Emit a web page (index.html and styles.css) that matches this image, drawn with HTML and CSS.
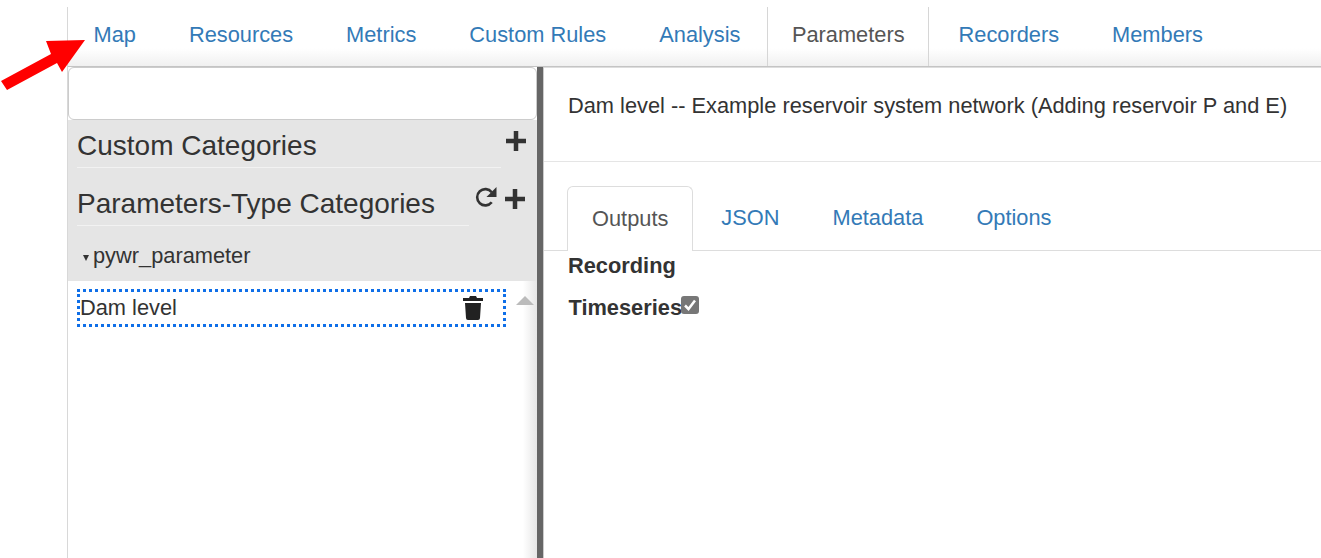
FILE: index.html
```html
<!DOCTYPE html>
<html lang="en">
<head>
  <meta charset="UTF-8" />
  <title>Dam level</title>
  <link rel="stylesheet" href="styles.css">
</head>
<body>
  <svg class="arrow" width="90" height="95" viewBox="0 0 90 95">
    <polygon points="85,40 46,41 51,54 1,81 7,90 57,63 62,72" fill="#f00"/>
  </svg>

  <div class="app">
    <ul class="nav">
      <li><a>Map</a></li>
      <li><a>Resources</a></li>
      <li><a>Metrics</a></li>
      <li><a>Custom Rules</a></li>
      <li><a>Analysis</a></li>
      <li class="active"><a>Parameters</a></li>
      <li><a>Recorders</a></li>
      <li><a>Members</a></li>
    </ul>

    <div class="main">
      <div class="sidebar">
        <div class="search"></div>
        <div class="categories">
          <div class="cat-head cat-custom">
            <h3>Custom Categories</h3>
            <div class="cat-icons">
              <svg class="icon" viewBox="0 0 20 20"><path d="M0 10H20M10 0V20" stroke="#333" stroke-width="4.500" fill="none"/></svg>
            </div>
          </div>
          <div class="cat-head cat-type">
            <h3>Parameters-Type Categories</h3>
            <div class="cat-icons">
              <svg class="icon-refresh" viewBox="0 0 24 24"><path d="M18.500 17A8.500 8.500 0 1 1 18.500 6.500" stroke="#333" stroke-width="2.700" fill="none"/><path d="M23.500 1V11.500H13Z" fill="#333"/></svg>
              <svg class="icon" viewBox="0 0 20 20"><path d="M0 10H20M10 0V20" stroke="#333" stroke-width="4.500" fill="none"/></svg>
            </div>
          </div>
          <div class="tree-node"><span class="caret"></span>pywr_parameter</div>
        </div>
        <div class="list">
          <div class="list-item">
            <span>Dam level</span>
            <svg class="trash" viewBox="0 0 20 24"><path d="M7 0H13L14 2H20V5H0V2H6Z" fill="#222"/><path d="M2 7H18L17 22Q17 24 15 24H5Q3 24 3 22Z" fill="#222"/></svg>
          </div>
          <span class="scroll-up"></span>
        </div>
      </div>

      <div class="splitter"></div>

      <div class="detail">
        <div class="detail-title">Dam level -- Example reservoir system network (Adding reservoir P and E)</div>
        <ul class="tabs">
          <li class="active"><a>Outputs</a></li>
          <li><a>JSON</a></li>
          <li><a>Metadata</a></li>
          <li><a>Options</a></li>
        </ul>
        <div class="recording">Recording</div>
        <div class="timeseries">Timeseries<span class="check"><svg viewBox="0 0 18 18"><path d="M4 9.500L7.500 13L14 4.500" stroke="#fff" stroke-width="2.500" fill="none"/></svg></span></div>
      </div>
    </div>
  </div>
</body>
</html>
```

FILE: styles.css
```css
body {
  margin: 0;
  height: 558px;
  overflow: hidden;
  background-color: #fff;
  color: #333;
  font-family: "Liberation Sans", Arial, sans-serif;
  padding-top: 7px;
  box-sizing: border-box;
}
.arrow {
  position: absolute;
  left: 0;
  top: 0;
}
.app {
  margin-left: 67px;
  height: 551px;
  border-left: 1px solid #d8d8d8;
  display: flex;
  flex-direction: column;
}
.nav {
  list-style: none;
  margin: 0;
  padding: 0;
  height: 60px;
  display: flex;
  flex: none;
  background: linear-gradient(#fff 70%, #f0f0f0);
  border-bottom: 1px solid #c4c4c4;
  box-sizing: border-box;
  font-size: 21.800px;
}
.nav li {
  padding: 15px 26.500px 0;
  color: #337ab7;
  white-space: nowrap;
}
.nav li:first-child {
  padding-left: 25.500px;
}
.nav li.active {
  color: #555;
  padding: 15px 23.500px 0 24px;
  margin-right: 3px;
  border-left: 1px solid #d6d6d6;
  border-right: 1px solid #d6d6d6;
}
.main {
  flex: 1;
  display: flex;
  min-height: 0;
}
.sidebar {
  width: 469px;
  flex: none;
  display: flex;
  flex-direction: column;
}
.search {
  height: 53px;
  flex: none;
  box-sizing: border-box;
  border: 1px solid #ccc;
  border-radius: 6px;
  background-color: #fff;
}
.categories {
  background-color: #e5e5e5;
  padding: 0 0 0 9px;
  height: 161px;
  flex: none;
  box-sizing: border-box;
}
.cat-head {
  display: flex;
  align-items: flex-start;
}
.cat-type {
  margin-top: 10px;
}
.cat-head h3 {
  margin: 0;
  height: 48px;
  box-sizing: border-box;
  border-bottom: 1px solid #f2f2f2;
  font-weight: normal;
  font-size: 28px;
  line-height: 52px;
  white-space: nowrap;
}
.cat-custom h3 {
  width: 424px;
}
.cat-type h3 {
  width: 392px;
}
.cat-icons {
  display: flex;
  align-items: flex-start;
  gap: 8px;
  margin-left: 5px;
  padding-top: 11px;
}
.icon {
  width: 20px;
  height: 20px;
  flex: none;
}
.icon-refresh {
  width: 23px;
  height: 23px;
  flex: none;
  margin-top: -3px;
}
.tree-node {
  font-size: 21.800px;
  margin-top: 17px;
  padding-left: 6px;
  line-height: 26px;
  display: flex;
  align-items: center;
}
.caret {
  width: 0;
  height: 0;
  border-left: 3.500px solid transparent;
  border-right: 3.500px solid transparent;
  border-top: 6px solid #333;
  margin-right: 4px;
  margin-top: 3px;
}
.list {
  flex: 1;
  position: relative;
  background: linear-gradient(90deg, #fff 97%, #e6e6e6);
}
.list-item {
  margin: 8px 0 0 9px;
  width: 429px;
  height: 38px;
  box-sizing: border-box;
  border: 3px dotted #0f6fe8;
  display: flex;
  justify-content: space-between;
  align-items: center;
  font-size: 21.800px;
  padding: 0 20px 0 0;
}
.trash {
  width: 20px;
  height: 24px;
  flex: none;
}
.scroll-up {
  position: absolute;
  left: 448px;
  top: 15px;
  width: 0;
  height: 0;
  border-left: 9px solid transparent;
  border-right: 9px solid transparent;
  border-bottom: 9px solid #bbb;
}
.splitter {
  width: 6px;
  flex: none;
  background-color: #666;
}
.detail {
  flex: 1;
  min-width: 0;
  border-left: 1px solid #ccc;
  box-shadow: inset 0 1px 0 #ddd;
}
.detail-title {
  height: 95px;
  box-sizing: border-box;
  border-bottom: 1px solid #e5e5e5;
  padding: 26px 0 0 24px;
  font-size: 21.800px;
  white-space: nowrap;
}
.tabs {
  list-style: none;
  margin: 24px 0 0;
  padding: 0 0 0 23px;
  height: 65px;
  display: flex;
  box-sizing: border-box;
  border-bottom: 1px solid #ddd;
  font-size: 21.800px;
  color: #337ab7;
}
.tabs li {
  padding: 19px 26.500px 0;
}
.tabs li.active {
  color: #555;
  padding: 19px 24px 0;
  margin-right: 1.500px;
  height: 65px;
  box-sizing: border-box;
  background-color: #fff;
  border: 1px solid #ddd;
  border-bottom: none;
  border-radius: 6px 6px 0 0;
}
.recording {
  margin: 2px 0 0 24px;
  font-size: 21.800px;
  font-weight: bold;
  line-height: 26px;
}
.timeseries {
  margin: 16px 0 0 24.500px;
  font-size: 21.800px;
  font-weight: bold;
  line-height: 26px;
  display: flex;
  align-items: flex-start;
}
.check {
  width: 18px;
  height: 18px;
  margin: 1px 0 0 -1.500px;
  background-color: #777;
  border-radius: 3px;
  display: block;
}
.check svg {
  display: block;
}
```
